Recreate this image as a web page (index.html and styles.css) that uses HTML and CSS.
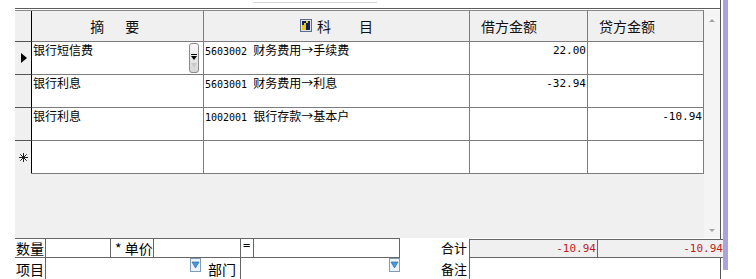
FILE: index.html
```html
<!DOCTYPE html>
<html lang="zh-CN">
<head>
    <meta charset="UTF-8">
    <title>凭证录入</title>
    <link rel="stylesheet" href="styles.css">
</head>
<body>
    <div class="screen">
        <div class="window">
            <div class="tabline"></div>
            <div class="frame">
                <!-- Voucher grid -->
                <div class="gridarea">
                    <div class="grid">
                        <div class="row head">
                            <div class="sel"></div>
                            <div class="cell center"><span class="wide">摘　要</span></div>
                            <div class="cell center">
                                <svg class="subj-icon" width="12" height="13" viewBox="0 0 12 13">
                                    <rect x="0.5" y="0.5" width="11" height="12" fill="#dfe4ee" stroke="#5d6b8c"/>
                                    <rect x="2" y="2" width="8" height="9" fill="#14205c"/>
                                    <rect x="2" y="6" width="4" height="5" fill="#e8c81c"/>
                                    <rect x="6" y="2" width="2" height="2" fill="#e8c81c"/>
                                    <rect x="4" y="4" width="2" height="2" fill="#e8c81c"/>
                                </svg>科　　目
                            </div>
                            <div class="cell left">借方金额</div>
                            <div class="cell left">贷方金额</div>
                        </div>
                        <div class="row">
                            <div class="sel"><span class="cursor"></span></div>
                            <div class="cell txt combo-cell">
                                <span>银行短信费</span>
                                <svg class="combo" width="10" height="30" viewBox="0 0 10 30">
                                    <defs>
                                        <linearGradient id="cg" x1="0" y1="0" x2="0" y2="1">
                                            <stop offset="0" stop-color="#fbfbfb"/>
                                            <stop offset="1" stop-color="#d6d6d6"/>
                                        </linearGradient>
                                    </defs>
                                    <rect x="0.5" y="0.5" width="9" height="29" rx="2.5" fill="url(#cg)" stroke="#8a8a8a"/>
                                    <rect x="2" y="11" width="6" height="1" fill="#000"/>
                                    <path d="M2 13h6l-3 4z" fill="#000"/>
                                    <path d="M2 20h6l-3 5z" fill="#c8c8c8"/>
                                </svg>
                            </div>
                            <div class="cell txt"><span class="code">5603002</span>财务费用→手续费</div>
                            <div class="cell num">22.00</div>
                            <div class="cell num"></div>
                        </div>
                        <div class="row">
                            <div class="sel"></div>
                            <div class="cell txt">银行利息</div>
                            <div class="cell txt"><span class="code">5603001</span>财务费用→利息</div>
                            <div class="cell num">-32.94</div>
                            <div class="cell num"></div>
                        </div>
                        <div class="row">
                            <div class="sel"></div>
                            <div class="cell txt">银行利息</div>
                            <div class="cell txt"><span class="code">1002001</span>银行存款→基本户</div>
                            <div class="cell num"></div>
                            <div class="cell num">-10.94</div>
                        </div>
                        <div class="row">
                            <div class="sel">
                                <svg class="star" width="9" height="9" viewBox="0 0 9 9">
                                    <path d="M4.5 0v9M0 4.5h9M1.3 1.3l6.4 6.4M7.7 1.3l-6.4 6.4" stroke="#222" stroke-width="1"/>
                                </svg>
                            </div>
                            <div class="cell txt"></div>
                            <div class="cell txt"></div>
                            <div class="cell num"></div>
                            <div class="cell num"></div>
                        </div>
                    </div>
                    <div class="vscroll">
                        <span class="arrow-up"></span>
                        <span class="arrow-down"></span>
                    </div>
                </div>

                <!-- Entry fields -->
                <div class="form-row">
                    <div class="fields">
                        <div class="label w30">数量</div>
                        <div class="box w65"></div>
                        <div class="box label w43">* 单价</div>
                        <div class="box w87"></div>
                        <div class="box eq w13">=</div>
                        <div class="box last w147"></div>
                    </div>
                    <div class="caption">合计</div>
                    <div class="totals">
                        <div class="total w126">-10.94</div>
                        <div class="total w125">-10.94</div>
                    </div>
                </div>
                <div class="form-row second">
                    <div class="label w30">项目</div>
                    <div class="box drop w156">
                        <svg class="dd" width="11" height="14" viewBox="0 0 11 14">
                            <rect x="0.5" y="0.5" width="10" height="13" fill="#eef3f8" stroke="#7f9db9"/>
                            <path d="M2 4h7l-3.5 6z" fill="#4a9ade" stroke="#1f5f9c" stroke-width="0.6"/>
                        </svg>
                    </div>
                    <div class="label dept w39">部门</div>
                    <div class="box drop w160">
                        <svg class="dd" width="11" height="14" viewBox="0 0 11 14">
                            <rect x="0.5" y="0.5" width="10" height="13" fill="#eef3f8" stroke="#7f9db9"/>
                            <path d="M2 4h7l-3.5 6z" fill="#4a9ade" stroke="#1f5f9c" stroke-width="0.6"/>
                        </svg>
                    </div>
                    <div class="caption">备注</div>
                    <div class="box memo"></div>
                </div>
            </div>
        </div>
        <div class="purple"></div>
    </div>
</body>
</html>
```

FILE: styles.css
```css
body {
    margin: 0;
    background: #fff;
    font-family: "Noto Sans CJK SC", "Noto Sans", sans-serif;
    color: #000;
}
.screen {
    display: flex;
    padding-left: 15px;
    height: 279px;
    overflow: hidden;
}
.window {
    width: 705px;
    border-right: 1px solid #555;
}
.tabline {
    width: 124px;
    height: 1px;
    margin: 2px 0 5px 238px;
    background: #d6d6d6;
}
.frame {
    border-top: 1px solid #5c5c5c;
    padding-top: 1px;
}
.gridarea {
    display: flex;
    height: 228px;
}
.grid {
    width: 689px;
    height: 228px;
    box-sizing: border-box;
    border-top: 1px solid #8a8a8a;
    background: #f0f0f0;
}
.row {
    display: grid;
    grid-template-columns: 17px 172px 266px 118px 116px;
    height: 33px;
}
.row.head {
    height: 31px;
}
.row > div {
    box-sizing: border-box;
    border-right: 1px solid #7c7c7c;
    border-bottom: 1px solid #7c7c7c;
}
.row > .sel {
    border-right-color: #000;
    border-bottom-color: #555;
    display: flex;
    align-items: center;
    justify-content: center;
}
.row:last-child > .sel {
    border-bottom-color: transparent;
}
.head .cell {
    font-size: 14px;
    line-height: 30px;
    color: #111;
}
.head .center {
    display: flex;
    justify-content: center;
    align-items: center;
}
.head .left {
    padding-left: 11px;
}
.wide {
    letter-spacing: 3.5px;
    margin-left: -2px;
}
.subj-icon {
    margin-right: 5px;
    margin-top: -1px;
}
.row .txt,
.row .num {
    background: #fff;
    font-size: 12px;
    line-height: 14px;
    padding: 1px 1px 0 1px;
}
.combo-cell {
    display: flex;
    justify-content: space-between;
    align-items: flex-start;
}
.combo {
    margin-right: 3px;
    flex-shrink: 0;
}
.code {
    font-family: "DejaVu Sans Mono", monospace;
    font-size: 10px;
    margin-right: 6px;
}
.row .num {
    font-family: "DejaVu Sans Mono", monospace;
    font-size: 11px;
    text-align: right;
    padding: 2px 1px 0 0;
}
.cursor {
    width: 0;
    height: 0;
    border-left: 6px solid #000;
    border-top: 5px solid transparent;
    border-bottom: 5px solid transparent;
    margin-left: 1px;
}
.star {
    margin-left: 1px;
}
.vscroll {
    width: 16px;
    background: #f4f4f4;
    display: flex;
    flex-direction: column;
    justify-content: space-between;
    align-items: center;
    padding: 9px 0 6px 0;
    box-sizing: border-box;
}
.arrow-up {
    border-bottom: 3px solid #a4a4a4;
    border-left: 3px solid transparent;
    border-right: 3px solid transparent;
}
.arrow-down {
    border-top: 3px solid #a4a4a4;
    border-left: 3px solid transparent;
    border-right: 3px solid transparent;
}
.form-row {
    display: flex;
    height: 20px;
    font-size: 14px;
}
.form-row.second {
    height: 22px;
}
.fields {
    display: flex;
    border-top: 1px solid #666;
    border-bottom: 1px solid #666;
    height: 20px;
    box-sizing: border-box;
}
.form-row > div,
.fields > div {
    box-sizing: border-box;
    flex-shrink: 0;
}
.label {
    line-height: 18px;
    padding-left: 1px;
}
.box {
    border-left: 1px solid #666;
}
.box.last {
    border-right: 1px solid #666;
}
.box.label {
    padding-left: 4px;
}
.eq {
    font-family: "DejaVu Sans Mono", monospace;
    font-size: 12px;
    line-height: 13px;
    padding-left: 2px;
}
.caption {
    width: 69px;
    font-size: 13px;
    line-height: 20px;
    text-align: right;
    padding-right: 2px;
}
.totals {
    display: flex;
    margin-top: 1px;
    height: 19px;
    border-top: 1px solid #666;
    border-bottom: 1px solid #666;
    box-sizing: border-box;
}
.total {
    background: #f0f0f0;
    border-left: 1px solid #666;
    font-family: "DejaVu Sans Mono", monospace;
    font-size: 11px;
    line-height: 17px;
    text-align: right;
    padding-right: 1px;
    color: #c21d1d;
}
.drop {
    display: flex;
    justify-content: flex-end;
    align-items: flex-start;
}
.dd {
    flex-shrink: 0;
}
.dept {
    padding-left: 7px;
}
.second .label,
.second .caption {
    line-height: 22px;
}
.memo {
    width: 251px;
}
.w13 { width: 13px; }
.w30 { width: 30px; }
.w39 { width: 39px; }
.w43 { width: 43px; }
.w65 { width: 65px; }
.w87 { width: 87px; }
.w125 { width: 125px; }
.w126 { width: 126px; }
.w147 { width: 147px; }
.w156 { width: 156px; }
.w160 { width: 160px; }
.purple {
    width: 5px;
    height: 270px;
    margin-left: 2px;
    background: #aba4dc;
}
```
